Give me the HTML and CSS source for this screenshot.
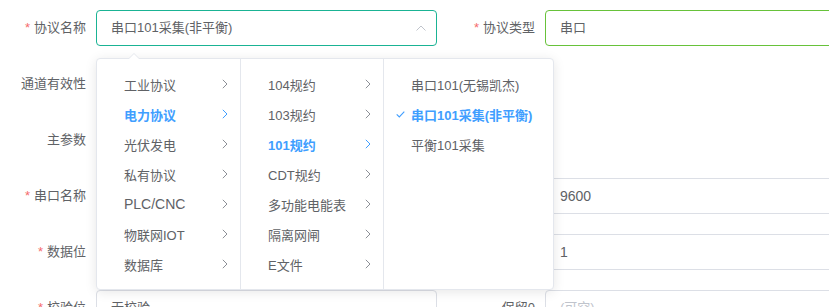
FILE: index.html
```html
<!DOCTYPE html>
<html lang="zh-CN">
<head>
<meta charset="utf-8">
<title>协议配置</title>
<link rel="stylesheet" href="styles.css">
</head>
<body>
<form class="form">
  <div class="row">
    <div class="item item-left">
      <label class="label req">协议名称</label>
      <div class="content">
        <div class="input select is-focus">
          <span class="value">串口101采集(非平衡)</span>
          <svg class="caret" width="10" height="6" viewBox="0 0 10 6"><path d="M0.5 5.5 L5 1 L9.5 5.5" fill="none" stroke="#c0c4cc" stroke-width="1"/></svg>
        </div>
        <div class="dropdown">
          <span class="arrow"></span>
          <div class="menus">
            <ul class="menu m1">
              <li class="node"><span>工业协议</span><svg class="chev" width="6" height="10" viewBox="0 0 6 10"><path d="M0.8 0.8 L5 5 L0.8 9.2" fill="none" stroke="currentColor"/></svg></li>
              <li class="node active"><span>电力协议</span><svg class="chev" width="6" height="10" viewBox="0 0 6 10"><path d="M0.8 0.8 L5 5 L0.8 9.2" fill="none" stroke="currentColor"/></svg></li>
              <li class="node"><span>光伏发电</span><svg class="chev" width="6" height="10" viewBox="0 0 6 10"><path d="M0.8 0.8 L5 5 L0.8 9.2" fill="none" stroke="currentColor"/></svg></li>
              <li class="node"><span>私有协议</span><svg class="chev" width="6" height="10" viewBox="0 0 6 10"><path d="M0.8 0.8 L5 5 L0.8 9.2" fill="none" stroke="currentColor"/></svg></li>
              <li class="node"><span class="latin">PLC/CNC</span><svg class="chev" width="6" height="10" viewBox="0 0 6 10"><path d="M0.8 0.8 L5 5 L0.8 9.2" fill="none" stroke="currentColor"/></svg></li>
              <li class="node"><span>物联网IOT</span><svg class="chev" width="6" height="10" viewBox="0 0 6 10"><path d="M0.8 0.8 L5 5 L0.8 9.2" fill="none" stroke="currentColor"/></svg></li>
              <li class="node"><span>数据库</span><svg class="chev" width="6" height="10" viewBox="0 0 6 10"><path d="M0.8 0.8 L5 5 L0.8 9.2" fill="none" stroke="currentColor"/></svg></li>
            </ul>
            <ul class="menu m2">
              <li class="node"><span>104规约</span><svg class="chev" width="6" height="10" viewBox="0 0 6 10"><path d="M0.8 0.8 L5 5 L0.8 9.2" fill="none" stroke="currentColor"/></svg></li>
              <li class="node"><span>103规约</span><svg class="chev" width="6" height="10" viewBox="0 0 6 10"><path d="M0.8 0.8 L5 5 L0.8 9.2" fill="none" stroke="currentColor"/></svg></li>
              <li class="node active"><span>101规约</span><svg class="chev" width="6" height="10" viewBox="0 0 6 10"><path d="M0.8 0.8 L5 5 L0.8 9.2" fill="none" stroke="currentColor"/></svg></li>
              <li class="node"><span>CDT规约</span><svg class="chev" width="6" height="10" viewBox="0 0 6 10"><path d="M0.8 0.8 L5 5 L0.8 9.2" fill="none" stroke="currentColor"/></svg></li>
              <li class="node"><span>多功能电能表</span><svg class="chev" width="6" height="10" viewBox="0 0 6 10"><path d="M0.8 0.8 L5 5 L0.8 9.2" fill="none" stroke="currentColor"/></svg></li>
              <li class="node"><span>隔离网闸</span><svg class="chev" width="6" height="10" viewBox="0 0 6 10"><path d="M0.8 0.8 L5 5 L0.8 9.2" fill="none" stroke="currentColor"/></svg></li>
              <li class="node"><span>E文件</span><svg class="chev" width="6" height="10" viewBox="0 0 6 10"><path d="M0.8 0.8 L5 5 L0.8 9.2" fill="none" stroke="currentColor"/></svg></li>
            </ul>
            <ul class="menu m3">
              <li class="node leaf"><span>串口101(无锡凯杰)</span></li>
              <li class="node leaf active"><svg class="check" width="9" height="7" viewBox="0 0 9 7"><path d="M0.7 3.3 L3.3 5.9 L8.3 0.7" fill="none" stroke="currentColor" stroke-width="1.1"/></svg><span>串口101采集(非平衡)</span></li>
              <li class="node leaf"><span>平衡101采集</span></li>
            </ul>
          </div>
        </div>
      </div>
    </div>
    <div class="item item-right">
      <label class="label req">协议类型</label>
      <div class="content"><div class="input success">串口</div></div>
    </div>
  </div>

  <div class="row">
    <div class="item item-left">
      <label class="label">通道有效性</label>
      <div class="content"></div>
    </div>
    <div class="item item-right">
      <label class="label"></label>
      <div class="content"></div>
    </div>
  </div>

  <div class="row">
    <div class="item item-left">
      <label class="label">主参数</label>
      <div class="content"></div>
    </div>
    <div class="item item-right">
      <label class="label"></label>
      <div class="content"></div>
    </div>
  </div>

  <div class="row">
    <div class="item item-left">
      <label class="label req">串口名称</label>
      <div class="content"><div class="input"></div></div>
    </div>
    <div class="item item-right">
      <label class="label req">波特率</label>
      <div class="content"><div class="input latin">9600</div></div>
    </div>
  </div>

  <div class="row">
    <div class="item item-left">
      <label class="label req">数据位</label>
      <div class="content"><div class="input"></div></div>
    </div>
    <div class="item item-right">
      <label class="label req">停止位</label>
      <div class="content"><div class="input latin">1</div></div>
    </div>
  </div>

  <div class="row">
    <div class="item item-left">
      <label class="label req">校验位</label>
      <div class="content"><div class="input">无校验</div></div>
    </div>
    <div class="item item-right">
      <label class="label">保留0</label>
      <div class="content"><div class="input placeholder">(可空)</div></div>
    </div>
  </div>
</form>
</body>
</html>
```

FILE: styles.css
```css
html, body {
  margin: 0;
  padding: 0;
  background: #ffffff;
  overflow: hidden;
}

body {
  font-family: "Liberation Sans", "Noto Sans CJK SC", sans-serif;
  font-size: 13px;
  color: #606266;
}

.form {
  width: 886px;
  padding-top: 10px;
  display: flex;
  flex-direction: column;
  gap: 20px;
}

.row {
  display: flex;
  height: 36px;
}

.item {
  display: flex;
}

.label {
  box-sizing: border-box;
  padding-right: 10px;
  text-align: right;
  line-height: 36px;
  font-size: 13px;
  color: #606266;
  white-space: nowrap;
}

.label.req::before {
  content: "*";
  color: #f56c6c;
  margin-right: 4px;
}

.item-left .label { width: 96px; }
.item-left .content { width: 341px; }
.item-right .label { width: 108px; }
.item-right .content { width: 341px; }

.content {
  position: relative;
}

.input {
  box-sizing: border-box;
  height: 36px;
  border: 1px solid #dcdfe6;
  border-radius: 4px;
  padding: 0 14px;
  line-height: 34px;
  font-size: 13px;
  color: #606266;
  background: #fff;
  white-space: nowrap;
}

.latin {
  font-size: 14px;
}

.input.success { border-color: #67c23a; }
.input.placeholder { color: #c0c4cc; }

.select {
  display: flex;
  align-items: center;
  justify-content: space-between;
}

.select.is-focus { border-color: #1ab394; }

.caret {
  margin-right: -4px;
  margin-top: -1px;
}

/* cascader dropdown */
.dropdown {
  position: absolute;
  top: 48px;
  left: 0;
  z-index: 10;
  background: #fff;
  border: 1px solid #e4e7ed;
  border-radius: 4px;
  box-shadow: 0 2px 12px 0 rgba(0, 0, 0, 0.1);
}

.arrow {
  position: absolute;
  top: -6px;
  left: 31px;
  width: 0;
  height: 0;
  border-left: 6px solid transparent;
  border-right: 6px solid transparent;
  border-bottom: 6px solid #e4e7ed;
}

.arrow::after {
  content: "";
  position: absolute;
  top: 1px;
  left: -6px;
  border-left: 6px solid transparent;
  border-right: 6px solid transparent;
  border-bottom: 6px solid #fff;
}

.menus {
  display: flex;
}

.menu {
  list-style: none;
  margin: 0;
  padding: 10px 0;
  box-sizing: border-box;
}

.m1 { width: 144px; border-right: 1px solid #e4e7ed; }
.m2 { width: 143px; border-right: 1px solid #e4e7ed; }
.m3 { width: 169px; }

.node {
  position: relative;
  display: flex;
  align-items: center;
  justify-content: space-between;
  height: 30px;
  padding: 0 12px 0 27px;
  font-size: 13px;
  color: #606266;
  white-space: nowrap;
}

.node.leaf {
  justify-content: flex-start;
}

.node .chev {
  color: #8c8f96;
  flex: none;
}

.node.active {
  color: #409eff;
  font-weight: 700;
}

.node.active .chev {
  color: #409eff;
}

.check {
  position: absolute;
  left: 12px;
  top: 12px;
  color: #409eff;
}
```
